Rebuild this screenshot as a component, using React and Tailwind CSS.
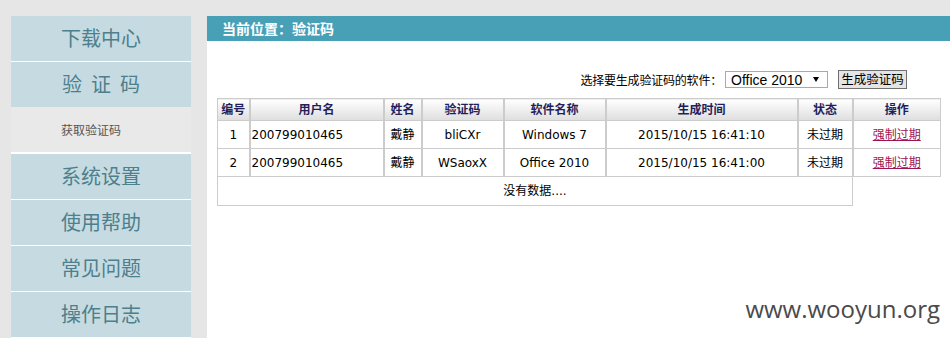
import React from 'react';

const menu2 = ['系统设置', '使用帮助', '常见问题', '操作日志'];

const rows = [
  { id: 1, user: '200799010465', name: '戴静', code: 'bliCXr', soft: 'Windows 7', time: '2015/10/15 16:41:10', state: '未过期' },
  { id: 2, user: '200799010465', name: '戴静', code: 'WSaoxX', soft: 'Office 2010', time: '2015/10/15 16:41:00', state: '未过期' },
];

const first = 'border-y border-l border-r-2 border-[#cccccc]';
const mid = 'border-y border-x-2 border-[#cccccc]';
const last = 'border-y border-l-2 border-r border-[#cccccc]';
const th = 'h-[22px] bg-gradient-to-b from-[#ffffff] to-[#dedede] font-bold text-[#231f5c] text-center';

export default function App() {
  return (
    <div className="relative w-[950px] h-[338px] overflow-hidden bg-[#e6e6e6] pt-[16px] flex font-['Noto_Sans_CJK_SC',sans-serif]">
      {/* Left menu */}
      <div className="ml-[11px] w-[180px] flex flex-col">
        <div className="h-[46px] pb-[2px] border-b border-white bg-[#c6dbe1] flex items-center justify-center text-[20px] leading-none text-[#4d7f8d]">
          下载中心
        </div>
        <div className="h-[45px] pb-[2px] bg-[#c6dbe1] flex items-center justify-center gap-[9px] text-[20px] leading-none text-[#4d7f8d]">
          <span>验</span>
          <span>证</span>
          <span>码</span>
        </div>
        <div className="h-[47px] border-b-2 border-white bg-[#e9e9e9] flex items-center pl-[50px] text-[12px] text-[#555555]">
          获取验证码
        </div>
        {menu2.map((m) => (
          <div key={m} className="h-[46px] pb-[2px] shrink-0 border-b border-white bg-[#c6dbe1] flex items-center justify-center text-[20px] leading-none text-[#4d7f8d]">
            {m}
          </div>
        ))}
      </div>

      {/* Main panel */}
      <div className="ml-[16px] flex-1 bg-white flex flex-col">
        <div className="h-[25px] bg-[#48a0b7] pl-[15px] flex items-center text-[14px] font-bold text-white">
          当前位置：验证码
        </div>

        <div className="mt-[29px] pr-[43px] flex justify-end items-center text-[12px] text-black">
          <span className="tracking-[-0.2px]">选择要生成验证码的软件：</span>
          <div className="ml-[3px] w-[103px] h-[17px] border border-[#a9a9a9] bg-white flex items-center justify-between pl-[5px] pr-[8px] font-['Liberation_Sans',sans-serif] text-[14px] leading-none">
            <span>Office 2010</span>
            <svg width="6" height="5" viewBox="0 0 6 5"><path d="M0 0h6L3 5z" fill="#000" /></svg>
          </div>
          <button className="ml-[10px] w-[69px] h-[19px] border border-[#707070] bg-[#e5e5e5] flex items-center justify-center text-[12.5px] leading-none text-black">
            生成验证码
          </button>
        </div>

        <table className="mt-[9px] ml-[10px] w-[723px] table-fixed border-collapse text-[12px] text-black font-['DejaVu_Sans','Noto_Sans_CJK_SC',sans-serif]">
          <colgroup>
            <col className="w-[32px]" />
            <col className="w-[134px]" />
            <col className="w-[38px]" />
            <col className="w-[82px]" />
            <col className="w-[102px]" />
            <col className="w-[192px]" />
            <col className="w-[55px]" />
            <col className="w-[88px]" />
          </colgroup>
          <thead>
            <tr>
              <th className={`${first} ${th}`}>编号</th>
              <th className={`${mid} ${th}`}>用户名</th>
              <th className={`${mid} ${th}`}>姓名</th>
              <th className={`${mid} ${th}`}>验证码</th>
              <th className={`${mid} ${th}`}>软件名称</th>
              <th className={`${mid} ${th}`}>生成时间</th>
              <th className={`${mid} ${th}`}>状态</th>
              <th className={`${last} ${th}`}>操作</th>
            </tr>
          </thead>
          <tbody>
            {rows.map((r) => (
              <tr key={r.id} className="h-[28px]">
                <td className={`${first} text-center`}>{r.id}</td>
                <td className={`${mid} pl-[1px]`}>{r.user}</td>
                <td className={`${mid} text-center`}>{r.name}</td>
                <td className={`${mid} text-center`}>{r.code}</td>
                <td className={`${mid} text-center`}>{r.soft}</td>
                <td className={`${mid} text-center`}>{r.time}</td>
                <td className={`${mid} text-center`}>{r.state}</td>
                <td className={`${last} text-center`}>
                  <a href="#" className="text-[#a0124f] underline">强制过期</a>
                </td>
              </tr>
            ))}
            <tr className="h-[29px]">
              <td colSpan={7} className="border-y border-l border-r border-[#cccccc] text-center">没有数据....</td>
            </tr>
          </tbody>
        </table>
      </div>

      {/* watermark */}
      <div className="absolute right-[10px] bottom-[17px] font-['Open_Sans',sans-serif] text-[24px] leading-none text-[#4a4a4a]">
        www.wooyun.org
      </div>
    </div>
  );
}
